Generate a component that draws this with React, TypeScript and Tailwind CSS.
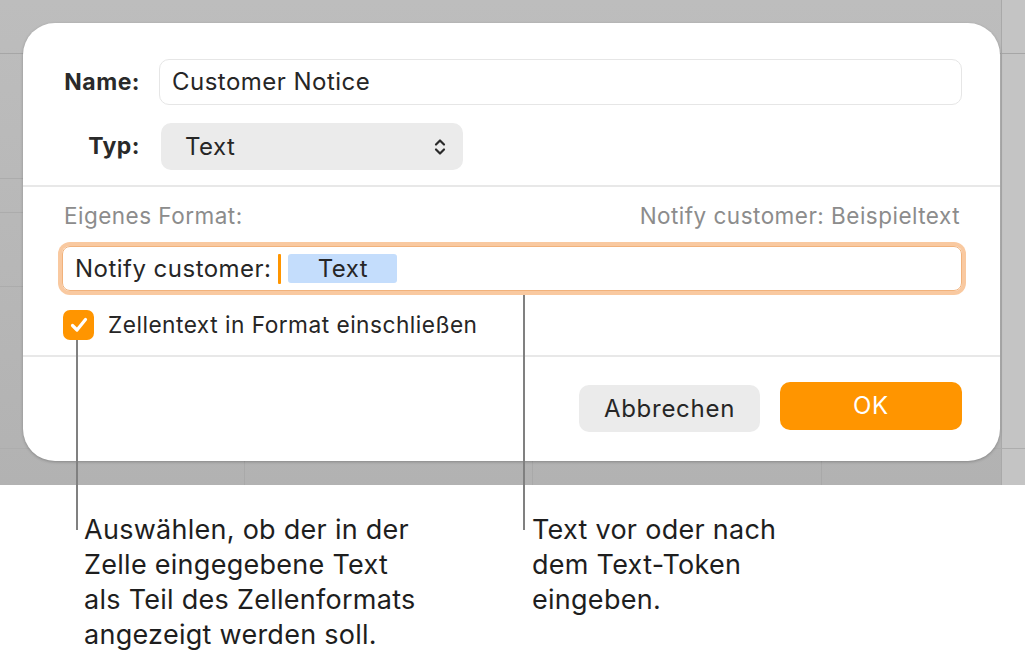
import React from 'react';

const ChevronUpDown = () => (
  <svg width="14" height="20" viewBox="0 0 14 20" fill="none">
    <path d="M3 7.5L7 3.5L11 7.5" stroke="#2a2a2a" strokeWidth="2.2" strokeLinecap="round" strokeLinejoin="round" />
    <path d="M3 12.5L7 16.5L11 12.5" stroke="#2a2a2a" strokeWidth="2.2" strokeLinecap="round" strokeLinejoin="round" />
  </svg>
);

const Check = () => (
  <svg width="20" height="18" viewBox="0 0 20 18" fill="none">
    <path d="M3.5 9.5L8 14L16.5 3.5" stroke="white" strokeWidth="3.2" strokeLinecap="round" strokeLinejoin="round" />
  </svg>
);

const App: React.FC = () => {
  return (
    <div className="relative w-[1025px] h-[651px] bg-white overflow-hidden font-['Inter',sans-serif] text-[#262626]">
      {/* spreadsheet backdrop */}
      <div className="relative h-[485px] bg-gradient-to-b from-[#bdbdbd] to-[#b2b2b2] pt-[23px] pl-[23px]">
        <div className="absolute left-[1001px] top-0 bottom-0 right-0 bg-[#c4c4c4] border-l border-[#a9a9a9]" />
        <div className="absolute left-0 right-0 top-[53px] h-px bg-[#a6a6a6]" />
        <div className="absolute left-0 w-[30px] top-[178px] h-px bg-[#acacac]" />
        <div className="absolute left-0 w-[30px] top-[212px] h-px bg-[#acacac]" />
        <div className="absolute left-0 w-[30px] top-[286px] h-px bg-[#acacac]" />
        <div className="absolute left-0 right-0 top-[448px] h-px bg-[#adadad]" />
        <div className="absolute left-[244px] top-[440px] bottom-0 w-px bg-[#a9a9a9]" />
        <div className="absolute left-[532px] top-[440px] bottom-0 w-px bg-[#a9a9a9]" />
        <div className="absolute left-[821px] top-[440px] bottom-0 w-px bg-[#a9a9a9]" />

        {/* dialog */}
        <div className="relative w-[977px] h-[438px] bg-white rounded-[32px] shadow-[0_1px_3px_rgba(0,0,0,0.25)] flex flex-col tracking-[0.03em]">
          <div className="pt-[36px] pl-[38px] pr-[38px] flex flex-col gap-[18px]">
            <div className="flex items-center">
              <div className="w-[79px] text-right font-bold text-[23px] text-[#2a2a2a]">Name:</div>
              <div className="ml-[19px] flex-1 h-[46px] rounded-[10px] border border-[#e6e6e6] flex items-center pl-[12px] text-[24px]">
                Customer Notice
              </div>
            </div>
            <div className="flex items-center">
              <div className="w-[79px] text-right font-bold text-[23px] text-[#2a2a2a]">Typ:</div>
              <div className="ml-[21px] w-[302px] h-[47px] rounded-[10px] bg-[#ebebeb] flex items-center justify-between pl-[24px] pr-[16px] text-[24px]">
                <span>Text</span>
                <ChevronUpDown />
              </div>
            </div>
          </div>

          <div className="mt-[15px] h-[2px] bg-[#e8e8e8]" />

          <div className="pt-[17px] pl-[39px] pr-[40px] flex flex-col">
            <div className="flex justify-between text-[22.5px] leading-[24px] text-[#8c8c8c]">
              <span className="pl-[2px]">Eigenes Format:</span>
              <span>Notify customer: Beispieltext</span>
            </div>
            <div className="mr-[-2px] mt-[18px] h-[45px] rounded-[8px] border border-[#f1b27c] shadow-[0_0_0_4px_#f9c9a0] flex items-center pl-[12px] text-[24px]">
              <span>Notify customer:</span>
              <span className="ml-[7px] w-[3px] h-[30px] bg-[#ff9500] rounded-[1px]" />
              <span className="ml-[7px] w-[109px] h-[29px] bg-[#c4ddfc] rounded-[3px] flex items-center justify-center">Text</span>
            </div>
            <div className="mt-[19px] flex items-center">
              <div className="ml-[1px] w-[31px] h-[30px] rounded-[7px] bg-[#ff9500] flex items-center justify-center">
                <Check />
              </div>
              <span className="ml-[14px] text-[22.7px] leading-[30px]">Zellentext in Format einschließen</span>
            </div>
          </div>

          <div className="mt-[15px] h-[2px] bg-[#e8e8e8]" />

          <div className="pt-[25px] pr-[38px] flex justify-end items-start gap-[20px]">
            <button className="mt-[3px] w-[181px] h-[47px] rounded-[10px] bg-[#ebebeb] text-[24px] tracking-[0.03em] text-[#262626]">Abbrechen</button>
            <button className="w-[182px] h-[48px] rounded-[10px] bg-[#ff9500] text-[24px] tracking-[0.03em] text-white">OK</button>
          </div>
        </div>
      </div>

      {/* callouts */}
      <div className="absolute left-[76px] top-[340px] w-[2px] h-[190px] bg-[#808080]" />
      <div className="absolute left-[523px] top-[295px] w-[2px] h-[235px] bg-[#808080]" />

      <div className="flex pt-[27px] text-[27px] leading-[35px] tracking-[0.01em] text-[#1e1e1e]">
        <div className="ml-[84px] w-[400px]">
          Auswählen, ob der in der<br />
          Zelle eingegebene Text<br />
          als Teil des Zellenformats<br />
          angezeigt werden soll.
        </div>
        <div className="ml-[48px]">
          Text vor oder nach<br />
          dem Text-Token<br />
          eingeben.
        </div>
      </div>
    </div>
  );
};

export default App;
